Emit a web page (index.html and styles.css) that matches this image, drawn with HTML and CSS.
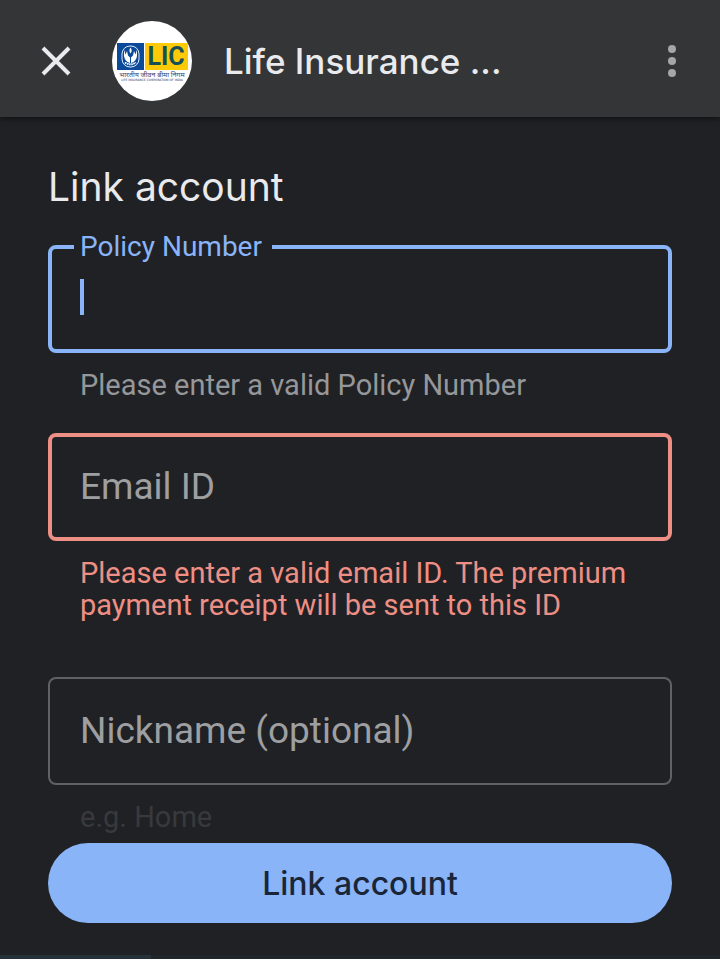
FILE: index.html
```html
<!DOCTYPE html>
<html lang="en">
<head>
    <meta charset="UTF-8">
    <meta name="viewport" content="width=device-width, initial-scale=1.0">
    <title>Link account</title>
    <link rel="stylesheet" href="styles.css">
</head>
<body>
    <header class="app-bar">
        <button type="button" class="icon-btn" aria-label="Close">
            <svg width="32" height="32" viewBox="0 0 32 32">
                <path d="M3 3L29 29M29 3L3 29" fill="none" stroke="currentColor" stroke-width="4"/>
            </svg>
        </button>
        <svg class="logo" width="80" height="80" viewBox="0 0 80 80" role="img" aria-label="LIC">
            <defs>
                <clipPath id="round"><circle cx="40" cy="40" r="40"/></clipPath>
            </defs>
            <g clip-path="url(#round)">
                <rect width="80" height="80" fill="#fff"/>
                <rect x="5" y="22" width="27" height="27" fill="#0b4a9b"/>
                <rect x="33" y="22" width="43" height="27" fill="#fdca08"/>
                <rect x="10" y="25" width="17" height="21" rx="8" fill="none" stroke="#dfe9f5"/>
                <path d="M18.500 26.500c-1.500 2-1.500 4 0 6c1.500-2 1.500-4 0-6z" fill="#fff"/>
                <path d="M12 29c1 2 1 3 1.500 4.500l1.500-3.500l1 4.500l2 2v5.500c-3.500-1-5.500-3.500-6-7zM25 29c-1 2-1 3-1.500 4.500l-1.500-3.500l-1 4.500l-2 2v5.500c3.500-1 5.500-3.500 6-7z" fill="#fff"/>
                <path d="M13 41.500q5.500 3.500 11 0" fill="none" stroke="#fff" stroke-width="2" stroke-dasharray="1.500 .7"/>
                <text class="logo-name" x="54" y="44" text-anchor="middle">LIC</text>
                <text class="logo-hindi" x="40" y="56" text-anchor="middle">भारतीय जीवन बीमा निगम</text>
                <text class="logo-small" x="40" y="60" text-anchor="middle">LIFE INSURANCE CORPORATION OF INDIA</text>
            </g>
        </svg>
        <div class="app-title">Life Insurance ...</div>
        <button type="button" class="icon-btn menu-btn" aria-label="More options">
            <svg width="8" height="32" viewBox="0 0 8 32">
                <g fill="currentColor">
                    <circle cx="4" cy="4" r="4"/>
                    <circle cx="4" cy="16" r="4"/>
                    <circle cx="4" cy="28" r="4"/>
                </g>
            </svg>
        </button>
    </header>

    <form class="link-form">
        <main class="content">
            <h1>Link account</h1>

            <div class="form-group">
                <div class="field focused">
                    <input type="text" id="policy" aria-describedby="policy-help">
                    <label for="policy">Policy Number</label>
                    <span class="caret"></span>
                </div>
                <p class="helper" id="policy-help">Please enter a valid Policy Number</p>
            </div>

            <div class="form-group invalid">
                <div class="field">
                    <input type="email" id="email" aria-invalid="true" aria-describedby="email-help">
                    <label for="email">Email ID</label>
                </div>
                <p class="helper" id="email-help">Please enter a valid email ID. The premium payment receipt will be sent to this ID</p>
            </div>

            <div class="form-group">
                <div class="field">
                    <input type="text" id="nickname" aria-describedby="nickname-help">
                    <label for="nickname">Nickname (optional)</label>
                </div>
                <p class="helper faded" id="nickname-help">e.g. Home</p>
            </div>
        </main>

        <footer class="actions">
            <button type="submit" class="btn">Link account</button>
        </footer>
    </form>

    <div class="progress"><div class="progress-bar"></div></div>
</body>
</html>
```
FILE: styles.css
```css
:root {
    --bg: #202124;
    --bar: #343536;
    --text: #e8eaed;
    --gray: #9e9fa1;
    --outline: #5f6164;
    --blue: #8ab4f8;
    --red: #ee8f86;
}

* {
    box-sizing: border-box;
    margin: 0;
    padding: 0;
}

body {
    display: flex;
    flex-direction: column;
    min-height: 100vh;
    font-family: Roboto, sans-serif;
    color: var(--text);
    background-color: var(--bg);
}

.app-bar {
    display: flex;
    align-items: center;
    height: 117px;
    padding: 4px 44px 0 40px;
    background-color: var(--bar);
    box-shadow: 0 1px 6px rgba(0, 0, 0, 0.6);
}

.icon-btn {
    display: flex;
    border: none;
    background: none;
    color: var(--text);
    cursor: pointer;
}

.menu-btn {
    color: #a5a6a8;
}

.logo {
    margin-left: 40px;
    flex-shrink: 0;
}

.logo-name {
    font: 700 25px Roboto, sans-serif;
    fill: #174f57;
}

.logo-hindi {
    font: 400 7px "Noto Sans", sans-serif;
    fill: #3c4472;
}

.logo-small {
    font: 400 3px "DejaVu Sans", sans-serif;
    fill: #2c3468;
}

.app-title {
    flex: 1;
    margin-left: 32px;
    font-family: Inter, sans-serif;
    font-size: 35px;
    font-weight: 500;
    line-height: 48px;
    white-space: nowrap;
}

.link-form {
    flex: 1;
    display: flex;
    flex-direction: column;
}

.content {
    flex: 1;
    padding: 46px 48px 0;
}

h1 {
    margin-bottom: 34px;
    font-family: Inter, sans-serif;
    font-size: 39px;
    font-weight: 400;
    line-height: 48px;
}

.form-group {
    margin-bottom: 32px;
}

.form-group:last-child {
    margin-bottom: 0;
}

.field {
    position: relative;
}

.field input {
    display: block;
    width: 100%;
    height: 108px;
    padding: 0 32px;
    border: 2px solid var(--outline);
    border-radius: 8px;
    outline: none;
    background: transparent;
    color: var(--text);
    font-family: inherit;
    font-size: 37px;
}

.field label {
    position: absolute;
    left: 32px;
    top: 32px;
    color: var(--gray);
    font-size: 37px;
    line-height: 44px;
}

.focused input {
    border: 4px solid var(--blue);
}

.focused label {
    left: 26px;
    top: -16px;
    padding: 0 10px 0 6px;
    background-color: var(--bg);
    color: var(--blue);
    font-size: 28px;
    line-height: 36px;
}

/* text cursor of the active field */
.caret {
    position: absolute;
    left: 32px;
    top: 34px;
    width: 4px;
    height: 36px;
    background-color: var(--blue);
}

.helper {
    padding: 16px 32px 0;
    color: #96979a;
    font-size: 29px;
    line-height: 32px;
}

.invalid {
    margin-bottom: 56px;
}

.invalid input {
    border: 4px solid var(--red);
}

.invalid .helper {
    padding-right: 16px;
    color: var(--red);
}

.faded {
    color: #38393c;
}

.actions {
    padding: 10px 48px 32px;
}

.btn {
    display: block;
    width: 100%;
    height: 80px;
    border: none;
    border-radius: 40px;
    background-color: var(--blue);
    color: #1b2538;
    font-family: Inter, sans-serif;
    font-size: 32px;
    font-weight: 500;
    cursor: pointer;
}

.progress {
    height: 4px;
    background-color: #20272b;
}

.progress-bar {
    width: 21%;
    height: 100%;
    background-color: #26313a;
}
```
